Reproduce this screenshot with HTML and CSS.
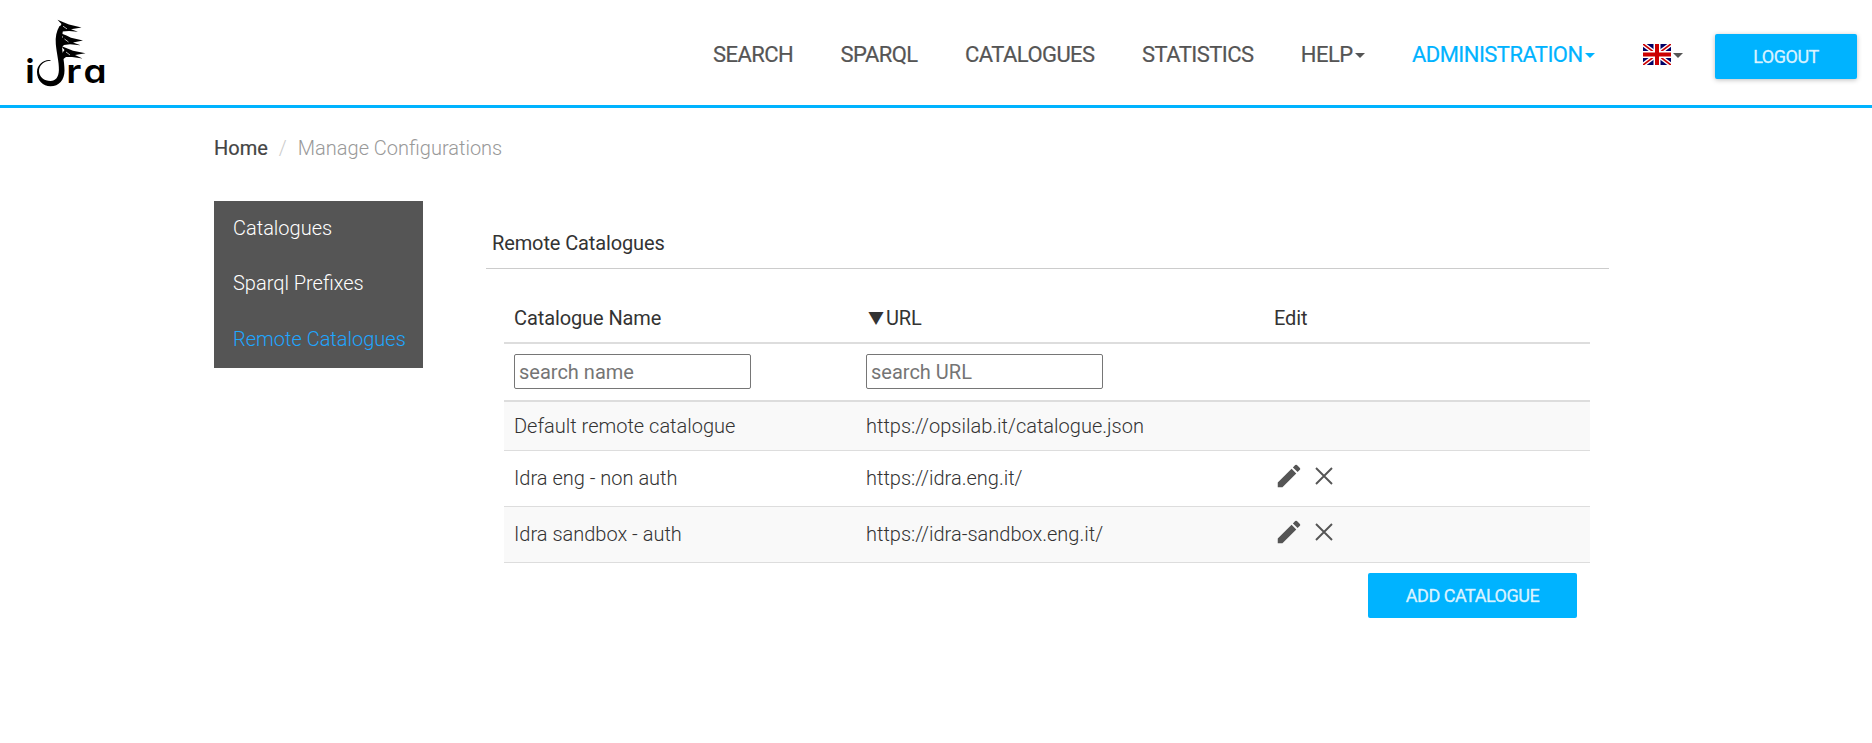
FILE: index.html
```html
<!DOCTYPE html>
<html lang="en">
<head>
<meta charset="utf-8">
<title>Idra - Manage Configurations</title>
<link rel="stylesheet" href="styles.css">
</head>
<body>
<svg class="symbols" width="0" height="0" aria-hidden="true">
  <symbol id="pencil" viewBox="0 0 24 24"><path d="M3 17.25V21h3.75L17.81 9.94l-3.75-3.75L3 17.25zM20.71 7.04a1 1 0 0 0 0-1.41l-2.34-2.34a1 1 0 0 0-1.41 0l-1.83 1.83 3.75 3.75 1.83-1.83z"/></symbol>
  <symbol id="cross" viewBox="0 0 18 18"><path d="M1 1 17 17M17 1 1 17" fill="none" stroke="currentColor" stroke-width="1.9"/></symbol>
</svg>
<header class="navbar">
  <a class="brand" href="#">
    <svg width="90" height="76" viewBox="20 16 90 76" aria-label="idra">
      <text class="logo-i" x="25.6" y="83">i</text>
      <text class="logo-text" transform="translate(66.300 83) scale(1.150 1)">r</text>
      <text class="logo-text" transform="translate(83.600 83) scale(1.120 1)">a</text>
      <path d="M50.500 60C44 59 37 64.500 37 72c0 8.500 6 14.300 13.500 14.300C59 86.300 64.500 80 64.500 70.500c0-10-2.500-17-2.500-27 0-7 .5-12 1.500-16L59.500 26C56.500 31 55.200 37 55.800 44c.7 9 3.400 18 3.100 26-.2 7-3.200 11-8.400 11-6.300 0-11.500-4-11.500-10 0-5.500 5-10.300 11.500-10.300z"/>
      <path d="M59 28 61.500 24 57.500 19.800 64 22.500 69 24.500 81.500 27.500 71 29.300 78 31.800 69 31 62 31.500 60 35z"/>
      <path d="M58 42 63 37 60 33 66.500 35.500 71 37.700 83 40.500 73 42.500 80.500 45.200 70 44.200 64 45 60 49z"/>
      <path d="M60 56 64.500 50 61 46 68 48.800 73 50.800 85.500 53.300 75 55 82.500 58.500 72 57 66 57 62 60z"/>
      <path class="logo-cut" d="M63 26.200l4 2.700M64.500 39l4 3M66 52l4 3"/>
    </svg>
  </a>
  <nav class="menu">
    <a href="#">SEARCH</a>
    <a href="#">SPARQL</a>
    <a href="#">CATALOGUES</a>
    <a href="#">STATISTICS</a>
    <a href="#">HELP<i class="caret"></i></a>
    <a class="active" href="#">ADMINISTRATION<i class="caret"></i></a>
    <a class="lang" href="#"><svg class="flag" width="28" height="21" viewBox="0 0 28 21"><path fill="#006" d="M0 0h28v21H0z"/><path d="M0 0 28 21M28 0 0 21" stroke="#fff" stroke-width="4.400"/><path d="M0 0 28 21M28 0 0 21" stroke="#c00" stroke-width="1.700"/><path d="M14 0v21M0 10.500h28" stroke="#fff" stroke-width="7"/><path d="M14 0v21M0 10.500h28" stroke="#c00" stroke-width="4"/></svg><i class="caret"></i></a>
  </nav>
  <button class="btn logout">LOGOUT</button>
</header>
<div class="container">
  <ol class="breadcrumb">
    <li><a href="#">Home</a></li>
    <li class="current">Manage Configurations</li>
  </ol>
  <div class="columns">
    <ul class="sidebar">
      <li>Catalogues</li>
      <li>Sparql Prefixes</li>
      <li class="selected">Remote Catalogues</li>
    </ul>
    <main class="panel">
      <h2 class="panel-title"><span>Remote Catalogues</span></h2>
      <div class="panel-body">
        <table class="table">
          <colgroup><col class="col-name"><col class="col-url"><col></colgroup>
          <thead>
            <tr class="head"><th><span>Catalogue Name</span></th><th><span class="sort">▼</span><span class="url-label">URL</span></th><th><span>Edit</span></th></tr>
            <tr class="filters"><th><input placeholder="search name"></th><th><input placeholder="search URL"></th><th></th></tr>
          </thead>
          <tbody>
            <tr class="short"><td>Default remote catalogue</td><td>https://opsilab.it/catalogue.json</td><td></td></tr>
            <tr><td>Idra eng - non auth</td><td>https://idra.eng.it/</td><td><div class="actions"><svg class="pencil"><use href="#pencil"/></svg><svg class="cross"><use href="#cross"/></svg></div></td></tr>
            <tr><td>Idra sandbox - auth</td><td>https://idra-sandbox.eng.it/</td><td><div class="actions"><svg class="pencil"><use href="#pencil"/></svg><svg class="cross"><use href="#cross"/></svg></div></td></tr>
          </tbody>
        </table>
        <button class="btn add">ADD CATALOGUE</button>
      </div>
    </main>
  </div>
</div>
</body>
</html>
```
FILE: styles.css
```css
* { box-sizing: border-box; }
body { margin: 0; background: #fff; color: #333; font: 300 20px/28px Roboto, sans-serif; }
a { color: inherit; text-decoration: none; }
ul, ol { list-style: none; margin: 0; padding: 0; }
.symbols { display: block; height: 0; }

.navbar { display: flex; align-items: flex-start; height: 108px; padding: 0 15px 0 20px; border-bottom: 3px solid #00b3ff; }
.brand { display: block; height: 76px; margin-top: 16px; }
.brand svg { display: block; }
.logo-i { font: 700 33px Inter, sans-serif; }
.logo-text { font: 600 33px Inter, sans-serif; font-feature-settings: "cv11"; }
.logo-cut { stroke: #fff; stroke-width: .7; fill: none; }
.menu { display: flex; gap: 47.400px; margin-left: auto; padding-top: 40px; color: #555; font-size: 22px; line-height: 30px; font-weight: 400; letter-spacing: -.55px; }
.menu a { display: flex; align-items: center; -webkit-text-stroke: .2px currentColor; }
.menu .active { color: #00b3ff; }
.menu .active .caret { margin-right: 1px; }
.caret { border: 5px solid transparent; border-top-color: currentColor; border-bottom: 0; margin: 0 0 0 2px; }
.flag { margin-top: -2px; }
.btn { border: 0; border-radius: 2px; background: #00b3ff; color: rgba(255, 255, 255, .84); font: 400 18px/45px Roboto, sans-serif; height: 45px; padding: 0; text-align: center; letter-spacing: -.48px; -webkit-text-stroke: .4px rgba(255, 255, 255, .6); }
.logout { width: 142px; margin: 34px 0 0 32px; box-shadow: 0 1px 5px rgba(0, 0, 0, .26); }

.container { width: 1395px; margin-left: 214px; }
.breadcrumb { display: flex; height: 93px; padding-top: 26px; }
.breadcrumb a { color: #444; font-weight: 400; -webkit-text-stroke: .2px currentColor; }
.current { color: #999; }
.current::before { content: "/"; color: #ccc; padding: 0 11px; }
.columns { display: flex; justify-content: space-between; align-items: flex-start; }
.sidebar { width: 209px; height: 167px; background: #555; color: #fff; padding-top: 13px; }
.sidebar li { height: 55.4px; padding-left: 19px; }
.sidebar .selected { color: #1ea6ff; }
.panel { width: 1123px; padding-top: 28px; }
.panel-title { margin: 0; height: 40px; padding-left: 6px; font-size: 20px; font-weight: 400; letter-spacing: -.12px; border-bottom: 1px solid #ccc; }
.panel-body { padding: 31px 19px 0 18px; }
.table { width: 100%; table-layout: fixed; border-collapse: separate; border-spacing: 0; }
.col-name { width: 352px; }
.col-url { width: 408px; }
.table th, .table td { padding: 0 10px; text-align: left; vertical-align: middle; }
.table th { font-weight: 400; letter-spacing: -.1px; border-bottom: 2px solid #ddd; }
.table td { height: 56px; padding-bottom: 1px; border-bottom: 1px solid #ddd; }
.table .short td { height: 49px; }
.table .head th { height: 44px; padding-bottom: 6px; }
.table .filters th { height: 58px; padding-bottom: 1px; }
.table input { display: block; width: 237px; height: 35px; padding: 1px 4px; border: 1px solid #767676; border-radius: 2px; font: 400 20px Roboto, sans-serif; }
.table input::placeholder { color: #757575; }
.table tbody tr:nth-child(odd) { background: #f9f9f9; }
.sort { display: inline-block; width: 18px; margin-left: 2px; line-height: 20px; vertical-align: 1px; font-family: "Noto Sans CJK JP", sans-serif; font-size: 16px; }
.actions { display: flex; align-items: center; gap: 11px; margin-top: -4px; color: #555; fill: #555; }
.pencil { width: 30px; height: 30px; }
.cross { width: 18px; height: 18px; }
.add { display: block; width: 209px; margin: 10px 13px 0 auto; }
```
